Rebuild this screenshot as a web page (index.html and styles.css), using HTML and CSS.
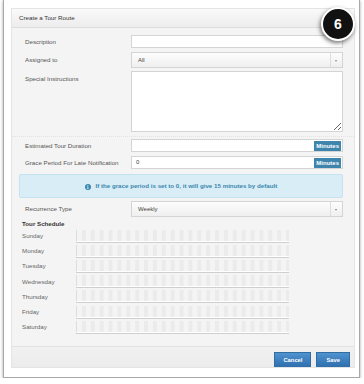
FILE: index.html
```html
<!DOCTYPE html>
<html lang="en">
<head>
    <meta charset="UTF-8">
    <title>Create a Tour Route</title>
    <link rel="stylesheet" href="styles.css">
</head>
<body>
    <div class="frame">
        <div class="modal">
            <div class="modal-header">Create a Tour Route</div>

            <div class="modal-body">
                <div class="field field-desc">
                    <label>Description</label>
                    <div class="control input"></div>
                </div>
                <div class="field field-select">
                    <label>Assigned to</label>
                    <div class="control select"><span>All</span><i class="caret"></i></div>
                </div>
                <div class="field field-area">
                    <label>Special Instructions</label>
                    <textarea class="control area"></textarea>
                </div>

                <div class="divider"></div>

                <div class="field field-desc">
                    <label>Estimated Tour Duration</label>
                    <div class="control input group"><span></span><b class="addon">Minutes</b></div>
                </div>
                <div class="field field-desc">
                    <label>Grace Period For Late Notification</label>
                    <div class="control input group"><span>0</span><b class="addon">Minutes</b></div>
                </div>

                <div class="alert">
                    <span class="info-icon">i</span>
                    If the grace period is set to 0, it will give 15 minutes by default
                </div>

                <div class="field field-rec">
                    <label>Recurrence Type</label>
                    <div class="control select"><span>Weekly</span><i class="caret"></i></div>
                </div>

                <!-- weekly schedule, one bar of 24 hour cells per day -->
                <div class="schedule">
                    <h4>Tour Schedule</h4>
                    <div class="day"><span>Sunday</span><div class="bar"></div></div>
                    <div class="day"><span>Monday</span><div class="bar"></div></div>
                    <div class="day"><span>Tuesday</span><div class="bar"></div></div>
                    <div class="day"><span>Wednesday</span><div class="bar"></div></div>
                    <div class="day"><span>Thursday</span><div class="bar"></div></div>
                    <div class="day"><span>Friday</span><div class="bar"></div></div>
                    <div class="day"><span>Saturday</span><div class="bar"></div></div>
                </div>
            </div>

            <div class="modal-footer">
                <button class="btn btn-cancel">Cancel</button>
                <button class="btn">Save</button>
            </div>
        </div>

        <div class="step-badge">6</div>
    </div>
</body>
</html>
```

FILE: styles.css
```css
body {
    margin: 0;
    font-family: "Liberation Sans", Arial, sans-serif;
    background-color: #fff;
}

.frame {
    position: relative;
    margin-left: 3px;
    width: 357px;
    height: 378px;
    border: 1px solid #a8a8a8;
    border-top: none;
    box-shadow: 0 1px 3px rgba(0, 0, 0, 0.35);
    background-color: #fff;
    padding-top: 8px;
    box-sizing: border-box;
}

.modal {
    margin-left: 7px;
    width: 344px;
    height: 360px;
    background-color: #f4f4f4;
    border: 1px solid #e4e4e4;
    box-sizing: border-box;
    display: flex;
    flex-direction: column;
}

.modal-header {
    height: 19px;
    line-height: 18px;
    padding-left: 7px;
    font-size: 6.2px;
    color: #333;
    background: linear-gradient(#fafafa, #ececec);
    border-bottom: 1px solid #dcdcdc;
    box-sizing: border-box;
}

.modal-body {
    flex: 1;
    padding: 7px 11px 0 13px;
}

.field {
    display: flex;
    font-size: 6.2px;
    color: #555;
}

.field label {
    width: 106px;
}

.control {
    width: 212px;
    box-sizing: border-box;
    border: 1px solid #d4d4d4;
    background-color: #fff;
    font-family: inherit;
    font-size: 6px;
    color: #444;
}

.field-desc {
    height: 13px;
    line-height: 13px;
    margin-bottom: 4px;
}

.field-select {
    height: 16px;
    line-height: 16px;
    margin-bottom: 3px;
}

.field-area label {
    padding-top: 4px;
    line-height: 8px;
}

.area {
    height: 61px;
    margin: 0;
    padding: 0;
    resize: both;
}

.select {
    display: flex;
    align-items: center;
    padding-left: 6px;
    background: linear-gradient(#fdfdfd, #efefef);
}

.select span {
    flex: 1;
}

.caret {
    width: 11px;
    height: 100%;
    border-left: 1px solid #ddd;
    position: relative;
}

.caret::after {
    content: "";
    position: absolute;
    left: 4px;
    top: 7px;
    border-left: 1.5px solid transparent;
    border-right: 1.5px solid transparent;
    border-top: 2px solid #888;
}

.group {
    display: flex;
    align-items: center;
    padding: 0 1px 0 4px;
}

.group span {
    flex: 1;
}

.addon {
    height: 10px;
    line-height: 10px;
    padding: 0 2px;
    font-size: 6px;
    color: #fff;
    background-color: #3d85ad;
}

.divider {
    margin: 4px -11px 2px -13px;
    border-top: 1px dotted #e2e2e2;
}

.alert {
    margin: 5px 0 3px -6px;
    height: 24px;
    box-sizing: border-box;
    border: 1px solid #c4e3f1;
    border-radius: 2px;
    background-color: #d9edf7;
    color: #3a87ad;
    font-size: 6.2px;
    font-weight: bold;
    text-align: center;
    line-height: 22px;
}

.info-icon {
    display: inline-block;
    width: 6px;
    height: 6px;
    line-height: 6px;
    border-radius: 50%;
    background-color: #3a87ad;
    color: #d9edf7;
    font-size: 5px;
    font-family: "DejaVu Serif", serif;
    margin-right: 3px;
    vertical-align: -1px;
}

.field-rec {
    height: 16px;
    line-height: 16px;
}

.schedule {
    margin-left: -3px;
    padding-top: 2px;
}

.schedule h4 {
    margin: 0;
    font-size: 6.2px;
    color: #333;
    height: 9px;
    line-height: 9px;
}

.day {
    display: flex;
    align-items: center;
    height: 15.2px;
    font-size: 6.2px;
    color: #666;
}

.day span {
    width: 54px;
}

.bar {
    width: 212px;
    height: 11px;
    border-left: 1px solid #ddd;
    border-bottom: 1px solid #fff;
    box-shadow: 0 1px 0 #cfcfcf;
    background: repeating-linear-gradient(to right, transparent 0 5.4px, #ebebeb 5.4px 9.4px, transparent 9.4px 8.875px);
    background-size: 8.875px 100%;
    background-position: 0 0;
}

.modal-footer {
    height: 21px;
    box-sizing: border-box;
    margin-top: 6px;
    border-top: 1px solid #e2e2e2;
    background: linear-gradient(#f1f1f1, #ececec);
    display: flex;
    justify-content: flex-end;
    align-items: flex-end;
    gap: 5px;
    padding-right: 4px;
}

.btn {
    height: 15px;
    padding: 0 9px;
    border: 1px solid #2f6da3;
    border-bottom: none;
    background: linear-gradient(#4f93cf, #2e6ead);
    color: #fff;
    font-family: inherit;
    font-size: 5.8px;
    font-weight: bold;
    cursor: pointer;
}

.btn-cancel {
    padding: 0 8px;
}

.step-badge {
    position: absolute;
    left: 317px;
    top: 7px;
    width: 30px;
    height: 30px;
    border: 2px solid #fff;
    border-radius: 50%;
    background-color: #111;
    color: #fff;
    font-size: 14px;
    font-weight: bold;
    text-align: center;
    line-height: 30px;
    box-shadow: -1px 2px 4px rgba(0, 0, 0, 0.55);
}
```
